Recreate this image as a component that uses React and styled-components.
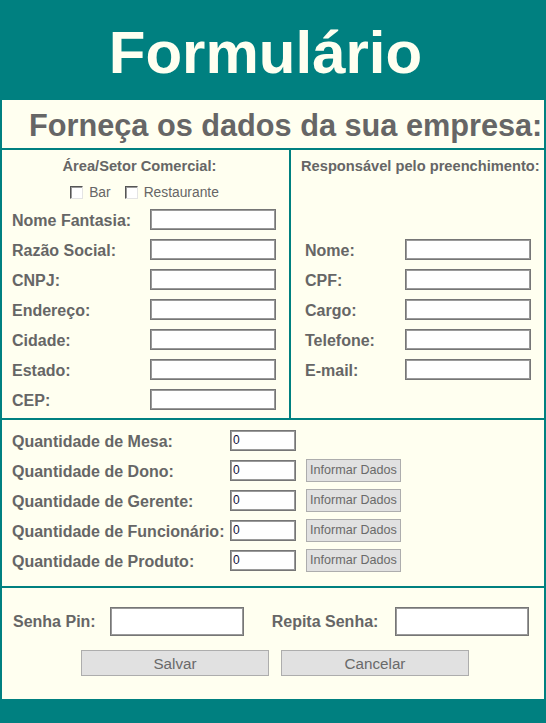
import React from 'react';
import styled, { createGlobalStyle } from 'styled-components';

const TEAL = '#008080';
const CREAM = '#fffff0';
const INK = '#666666';
const FONT = '"Liberation Sans", Arial, sans-serif';

const GlobalStyle = createGlobalStyle`
    html, body {
        margin: 0;
        padding: 0;
        background: ${TEAL};
    }
    body {
        font-family: ${FONT};
    }
    * {
        box-sizing: border-box;
    }
`;

const Page = styled.div`
    width: 546px;
    min-height: 723px;
    background: ${TEAL};
    display: flex;
    flex-direction: column;
`;

const Header = styled.header`
    height: 100px;
    display: flex;
    align-items: center;
    justify-content: center;
    padding: 6px 15px 0 0;
`;

const Title = styled.h1`
    margin: 0;
    font-family: ${FONT};
    font-size: 60px;
    font-weight: bold;
    line-height: 1;
    color: ${CREAM};
`;

const Sheet = styled.main`
    display: flex;
    flex-direction: column;
    gap: 2px;
    padding: 0 2px;
`;

const Cell = styled.section`
    background: ${CREAM};
`;

const Subtitle = styled.h2`
    margin: 0;
    height: 48px;
    padding: 3px 0 0 27px;
    line-height: 45px;
    font-size: 30.7px;
    font-weight: bold;
    color: ${INK};
    white-space: nowrap;
    overflow: hidden;
    background: ${CREAM};
`;

const Columns = styled.div`
    display: grid;
    grid-template-columns: 287px 253px;
    gap: 2px;
    height: 268px;
`;

const Column = styled(Cell)`
    padding: 6px 0 0 ${({ $pad }) => $pad}px;
`;

const ColumnTitle = styled.h3`
    margin: 0;
    font-size: 14.67px;
    font-weight: bold;
    line-height: 20px;
    color: ${INK};
    white-space: nowrap;
    text-align: ${({ $center }) => ($center ? 'center' : 'left')};
    padding-right: ${({ $center }) => ($center ? '22px' : '0')};
`;

const Choices = styled.div`
    display: flex;
    justify-content: center;
    align-items: center;
    gap: 14px;
    margin: 6px 12px 2px 0;
    height: 20px;
`;

const Choice = styled.label`
    display: flex;
    align-items: center;
    gap: 6px;
    font-size: 13.8px;
    color: ${INK};
`;

const Box = styled.input.attrs({ type: 'checkbox' })`
    appearance: none;
    margin: 0;
    width: 13px;
    height: 13px;
    background: #fff;
    border: 1px solid;
    border-color: #555 #e4e4e4 #e4e4e4 #555;
    box-shadow: inset 1px 1px 0 #9a9a9a;
`;

const Fields = styled.div`
    display: flex;
    flex-direction: column;
    margin-top: ${({ $top }) => $top}px;
    padding-left: ${({ $indent }) => $indent || 0}px;
`;

const Field = styled.div`
    display: flex;
    align-items: center;
    height: 30px;
`;

const Label = styled.label`
    flex: 0 0 ${({ $w }) => $w}px;
    padding-top: 3px;
    font-size: 16px;
    font-weight: bold;
    color: ${INK};
    white-space: nowrap;
`;

const TextBox = styled.input`
    width: ${({ $w }) => $w}px;
    height: ${({ $h }) => $h || 21}px;
    margin: 0;
    padding: 0 2px;
    border: 1px solid #767676;
    outline: 1px solid #9a9a9a;
    outline-offset: -2px;
    background: #fff;
    font-family: ${FONT};
    font-size: 12px;
    color: #10103a;
`;

const SmallButton = styled.button`
    width: 95px;
    height: 23px;
    margin-left: 10px;
    padding: 0;
    background: #e1e1e1;
    border: 1px solid #adadad;
    font-family: ${FONT};
    font-size: 12.6px;
    color: #6a6a6a;
`;

const Counts = styled(Cell)`
    padding: 5px 10px 11px;
`;

const Secret = styled(Cell)`
    padding: 19px 0 23px 11px;
    display: flex;
    flex-direction: column;
`;

const SecretRow = styled.div`
    display: flex;
    align-items: center;
    height: 29px;
`;

const SecretLabel = styled.label`
    font-size: 16px;
    font-weight: bold;
    color: ${INK};
    margin: 0 ${({ $after }) => $after}px 0 ${({ $gap }) => $gap || 0}px;
    white-space: nowrap;
`;

const Actions = styled.div`
    display: flex;
    justify-content: center;
    gap: 12px;
    margin-top: 14px;
    padding-right: 7px;
`;

const BigButton = styled.button`
    width: 188px;
    height: 26px;
    padding: 0;
    background: #e1e1e1;
    border: 1px solid #adadad;
    font-family: ${FONT};
    font-size: 15.2px;
    color: #6a6a6a;
`;

const Footer = styled.footer`
    height: 24px;
    background: ${TEAL};
`;

const companyFields = ['Nome Fantasia:', 'Razão Social:', 'CNPJ:', 'Endereço:', 'Cidade:', 'Estado:', 'CEP:'];
const personFields = ['Nome:', 'CPF:', 'Cargo:', 'Telefone:', 'E-mail:'];
const counts = [
    { label: 'Quantidade de Mesa:', action: false },
    { label: 'Quantidade de Dono:', action: true },
    { label: 'Quantidade de Gerente:', action: true },
    { label: 'Quantidade de Funcionário:', action: true },
    { label: 'Quantidade de Produto:', action: true },
];

const App = () => (
    <>
        <GlobalStyle />
        <Page>
            <Header>
                <Title>Formulário</Title>
            </Header>
            <Sheet>
                <Subtitle>Forneça os dados da sua empresa:</Subtitle>
                <Columns>
                    <Column $pad={10}>
                        <ColumnTitle $center>Área/Setor Comercial:</ColumnTitle>
                        <Choices>
                            <Choice><Box /> Bar</Choice>
                            <Choice><Box /> Restaurante</Choice>
                        </Choices>
                        <Fields $top={0}>
                            {companyFields.map((f) => (
                                <Field key={f}>
                                    <Label $w={138}>{f}</Label>
                                    <TextBox $w={126} />
                                </Field>
                            ))}
                        </Fields>
                    </Column>
                    <Column $pad={10}>
                        <ColumnTitle>Responsável pelo preenchimento:</ColumnTitle>
                        <Fields $top={58} $indent={4}>
                            {personFields.map((f) => (
                                <Field key={f}>
                                    <Label $w={100}>{f}</Label>
                                    <TextBox $w={126} />
                                </Field>
                            ))}
                        </Fields>
                    </Column>
                </Columns>
                <Counts>
                    {counts.map((c) => (
                        <Field key={c.label}>
                            <Label $w={218}>{c.label}</Label>
                            <TextBox $w={66} defaultValue="0" />
                            {c.action && <SmallButton>Informar Dados</SmallButton>}
                        </Field>
                    ))}
                </Counts>
                <Secret>
                    <SecretRow>
                        <SecretLabel $after={14}>Senha Pin:</SecretLabel>
                        <TextBox $w={134} $h={29} type="password" />
                        <SecretLabel $gap={28} $after={17}>Repita Senha:</SecretLabel>
                        <TextBox $w={134} $h={29} type="password" />
                    </SecretRow>
                    <Actions>
                        <BigButton>Salvar</BigButton>
                        <BigButton>Cancelar</BigButton>
                    </Actions>
                </Secret>
            </Sheet>
            <Footer />
        </Page>
    </>
);

export default App;
